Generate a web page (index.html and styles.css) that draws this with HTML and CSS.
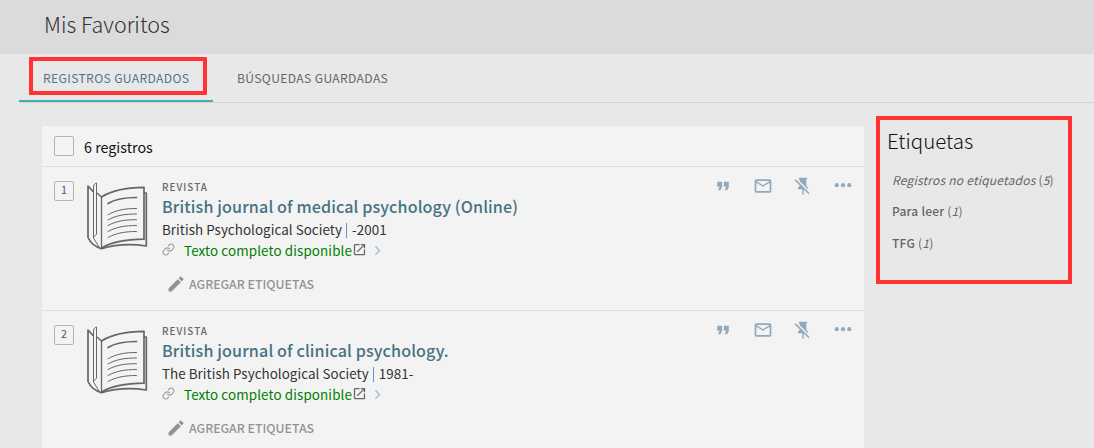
FILE: index.html
```html
<!DOCTYPE html>
<html lang="es">
<head>
    <meta charset="UTF-8">
    <meta name="viewport" content="width=device-width, initial-scale=1.0">
    <title>Mis Favoritos</title>
    <link rel="stylesheet" href="styles.css">
</head>
<body>
    <svg class="sprite" width="0" height="0">
        <symbol id="icon-book" viewBox="0 0 80 80">
            <g fill="none" stroke="#666" stroke-linejoin="round" stroke-linecap="round">
                <path stroke-width="1.7" d="M25.5 22C36 15 52 12.5 68 12.3V64.2C52 64.5 36 66.5 25.5 73"/>
                <path stroke-width="1.7" d="M68.5 18H70.3V71C54 68.5 39 69.5 25.5 73.7C20 72 14.5 68 12 62.5V11L17 16.5"/>
                <path stroke-width="1.3" d="M25.5 22V73.5M21 18L25.5 22"/>
                <path stroke-width="1" d="M17.5 62V13C17.5 10 18.5 8.5 20.5 8V59.5C18.5 61 17.5 61.5 17.5 63L23 72"/>
                <path stroke-width="1.7" d="M32 28.5C40 23.5 49 22.5 60.5 22.5"/>
                <path stroke-width="1" d="M32 39.7C40 35 49 33.5 60.5 33.5M32 45C40 40.3 49 39 60.5 39M32 50.5C40 46 49 44.7 60.5 44.7M32 56.5C40 52 49 50.5 60.5 50.5M32 62.5C40 58 49 56.5 60.5 56.5"/>
            </g>
        </symbol>
        <symbol id="icon-quote" viewBox="0 0 24 24">
            <path d="M6 17h3l2-4V7H5v6h3zm8 0h3l2-4V7h-6v6h3z"/>
        </symbol>
        <symbol id="icon-mail" viewBox="0 0 24 24">
            <path d="M20 4H4c-1.1 0-2 .9-2 2v12c0 1.1.9 2 2 2h16c1.1 0 2-.9 2-2V6c0-1.1-.9-2-2-2zm0 14H4V8l8 5 8-5v10zm-8-7L4 6h16l-8 5z"/>
        </symbol>
        <symbol id="icon-unpin" viewBox="0 0 24 24">
            <path d="M2 5.27L3.28 4 20 20.72 18.73 22l-5.93-5.93V22l-.8 1-.8-1v-6H6v-2l2-2v-.73zM16 12l2 2v2h-.18L8 6.18V4H7V2h10v2h-1z"/>
        </symbol>
        <symbol id="icon-more" viewBox="0 0 24 24">
            <circle cx="4.5" cy="11" r="2.5"/><circle cx="12" cy="11" r="2.5"/><circle cx="19.5" cy="11" r="2.5"/>
        </symbol>
        <symbol id="icon-link" viewBox="0 0 24 24">
            <g fill="none" stroke="currentColor" stroke-width="2" stroke-linecap="round">
                <path d="M10 13a5 5 0 0 0 7.54.54l3-3a5 5 0 0 0-7.07-7.07l-1.72 1.71"/>
                <path d="M14 11a5 5 0 0 0-7.54-.54l-3 3a5 5 0 0 0 7.07 7.07l1.71-1.71"/>
            </g>
        </symbol>
        <symbol id="icon-open" viewBox="0 0 24 24">
            <path d="M19 19H5V5h7V3H5a2 2 0 0 0-2 2v14a2 2 0 0 0 2 2h14c1.1 0 2-.9 2-2v-7h-2zM14 3v2h3.59l-9.83 9.83 1.41 1.41L19 6.41V10h2V3z"/>
        </symbol>
        <symbol id="icon-chevron" viewBox="0 0 24 24">
            <path d="M8.59 16.59L13.17 12 8.59 7.41 10 6l6 6-6 6z"/>
        </symbol>
        <symbol id="icon-pencil" viewBox="0 0 24 24">
            <path d="M3 17.25V21h3.75L17.81 9.94l-3.75-3.75zM20.71 7.04a1 1 0 0 0 0-1.41l-2.34-2.34a1 1 0 0 0-1.41 0l-1.83 1.83 3.75 3.75z"/>
        </symbol>
    </svg>

    <header class="page-header">
        <h1>Mis Favoritos</h1>
    </header>

    <nav class="tabs">
        <a class="tab active">REGISTROS GUARDADOS</a>
        <a class="tab">BÚSQUEDAS GUARDADAS</a>
    </nav>

    <main class="content">
        <section class="records">
            <div class="records-header">
                <span class="checkbox"></span>
                <span class="count">6 registros</span>
            </div>

            <article class="record">
                <span class="number">1</span>
                <svg class="cover"><use href="#icon-book"/></svg>
                <div class="details">
                    <div class="type">REVISTA</div>
                    <h3>British journal of medical psychology (Online)</h3>
                    <div class="author">British Psychological Society <i class="bar"></i> -2001</div>
                    <div class="availability">
                        <svg class="link"><use href="#icon-link"/></svg>
                        <span>Texto completo disponible</span>
                        <svg class="open"><use href="#icon-open"/></svg>
                        <svg class="chevron"><use href="#icon-chevron"/></svg>
                    </div>
                    <div class="add-tags">
                        <svg><use href="#icon-pencil"/></svg>
                        <span>AGREGAR ETIQUETAS</span>
                    </div>
                </div>
                <div class="actions">
                    <svg><use href="#icon-quote"/></svg>
                    <svg><use href="#icon-mail"/></svg>
                    <svg><use href="#icon-unpin"/></svg>
                    <svg><use href="#icon-more"/></svg>
                </div>
            </article>

            <article class="record">
                <span class="number">2</span>
                <svg class="cover"><use href="#icon-book"/></svg>
                <div class="details">
                    <div class="type">REVISTA</div>
                    <h3>British journal of clinical psychology.</h3>
                    <div class="author">The British Psychological Society <i class="bar"></i> 1981-</div>
                    <div class="availability">
                        <svg class="link"><use href="#icon-link"/></svg>
                        <span>Texto completo disponible</span>
                        <svg class="open"><use href="#icon-open"/></svg>
                        <svg class="chevron"><use href="#icon-chevron"/></svg>
                    </div>
                    <div class="add-tags">
                        <svg><use href="#icon-pencil"/></svg>
                        <span>AGREGAR ETIQUETAS</span>
                    </div>
                </div>
                <div class="actions">
                    <svg><use href="#icon-quote"/></svg>
                    <svg><use href="#icon-mail"/></svg>
                    <svg><use href="#icon-unpin"/></svg>
                    <svg><use href="#icon-more"/></svg>
                </div>
            </article>
        </section>

        <aside class="labels">
            <h2>Etiquetas</h2>
            <ul>
                <li><em>Registros no etiquetados</em> (<em>5</em>)</li>
                <li><b>Para leer</b> (<em>1</em>)</li>
                <li><b>TFG</b> (<em>1</em>)</li>
            </ul>
        </aside>
    </main>
</body>
</html>
```
FILE: styles.css
```css
* {
    box-sizing: border-box;
}
body {
    margin: 0;
    height: 448px;
    overflow: hidden;
    background-color: #e8e8e8;
    color: #333;
    font-family: "Noto Sans CJK SC", "Open Sans", sans-serif;
    font-size: 13.4px;
    white-space: nowrap;
}
h1, h2, h3, ul {
    margin: 0;
    padding: 0;
}
svg {
    display: block;
    flex: none;
    fill: currentColor;
}
.sprite {
    position: absolute;
}
.page-header {
    height: 54px;
    padding-left: 44px;
    background-color: #dbdbdb;
}
.page-header h1 {
    font-size: 21.5px;
    font-weight: 300;
    line-height: 48px;
}
.tabs {
    display: flex;
    height: 49px;
    margin-left: 19px;
    border-bottom: 1px solid #d3d3d3;
}
.tab {
    position: relative;
    padding: 0 24px;
    line-height: 48px;
    font-size: 12.1px;
    letter-spacing: 0.37px;
    color: #666;
}
.tab.active {
    width: 194px;
    color: #4d7590;
    border-bottom: 2px solid #44adb2;
}
/* highlight frame around the selected tab */
.tab.active::after {
    content: "";
    position: absolute;
    top: 3px;
    left: 10px;
    width: 170px;
    height: 30px;
    border: 4px solid #ff3333;
}
.content {
    display: flex;
    align-items: flex-start;
    gap: 12px;
    padding: 13px 0 0 42px;
}
.records {
    width: 822px;
    margin-top: 10px;
    background-color: #f3f3f3;
}
.records-header {
    display: flex;
    height: 41px;
    padding: 10px 12px;
    border-bottom: 1px solid #dfdfdf;
}
.checkbox {
    width: 20px;
    height: 20px;
    border: 1px solid #b4b4b4;
    border-radius: 2px;
}
.count {
    margin-left: 10px;
    font-size: 14.3px;
    line-height: 22px;
    color: #111;
}
.record {
    display: flex;
    height: 144px;
    padding-left: 12px;
    border-bottom: 1px solid #dfdfdf;
}
.number {
    width: 20px;
    height: 20px;
    margin-top: 14px;
    border: 1px solid #b4b4b4;
    border-radius: 2px;
    font-size: 10.8px;
    line-height: 15px;
    text-align: center;
    color: #4a5a66;
}
.cover {
    width: 80px;
    height: 80px;
    margin: 8px 0 0 2px;
}
.details {
    flex: 1;
    margin-left: 6px;
    padding-top: 12px;
}
.type {
    height: 16px;
    font-size: 9.8px;
    font-weight: 500;
    line-height: 16px;
    letter-spacing: 1.05px;
    color: #666;
}
.details h3 {
    height: 24px;
    font-size: 16.1px;
    font-weight: 500;
    line-height: 22px;
    letter-spacing: 0.12px;
    color: #477284;
}
.author {
    height: 20px;
    line-height: 21px;
    letter-spacing: 0.05px;
}
.bar {
    display: inline-block;
    width: 1px;
    height: 15px;
    margin: 0 2px 0 1px;
    vertical-align: -3px;
    background-color: #6295c0;
}
.availability {
    display: flex;
    align-items: center;
    height: 21px;
    letter-spacing: 0.12px;
    color: #008000;
}
.link {
    width: 13px;
    height: 13px;
    margin-right: 9px;
    color: #999;
}
.open {
    width: 15px;
    height: 15px;
    color: #666;
}
.chevron {
    width: 19px;
    height: 19px;
    margin: 2px 0 0 1px;
    color: #a4c2dd;
}
.add-tags {
    display: flex;
    align-items: center;
    height: 22px;
    margin: 13px 0 0 4px;
    font-size: 12.3px;
    font-weight: 500;
    color: #939393;
}
.add-tags svg {
    width: 20px;
    height: 20px;
    margin-right: 3px;
}
.actions {
    display: flex;
    gap: 20px;
    padding: 9px 11px 0 0;
    color: #93a8b8;
}
.actions svg {
    width: 20px;
    height: 20px;
}
.labels {
    width: 196px;
    height: 168px;
    padding: 8px 0 0 7px;
    border: 4px solid #ff3333;
    color: #666;
}
.labels h2 {
    font-size: 20.5px;
    font-weight: 300;
    line-height: 24px;
    color: #111;
}
.labels ul {
    margin: 12px 0 0 5px;
    list-style: none;
    font-size: 12px;
    letter-spacing: 0.22px;
}
.labels li {
    height: 31.4px;
    line-height: 31px;
}
.labels b {
    font-weight: 500;
}
```
